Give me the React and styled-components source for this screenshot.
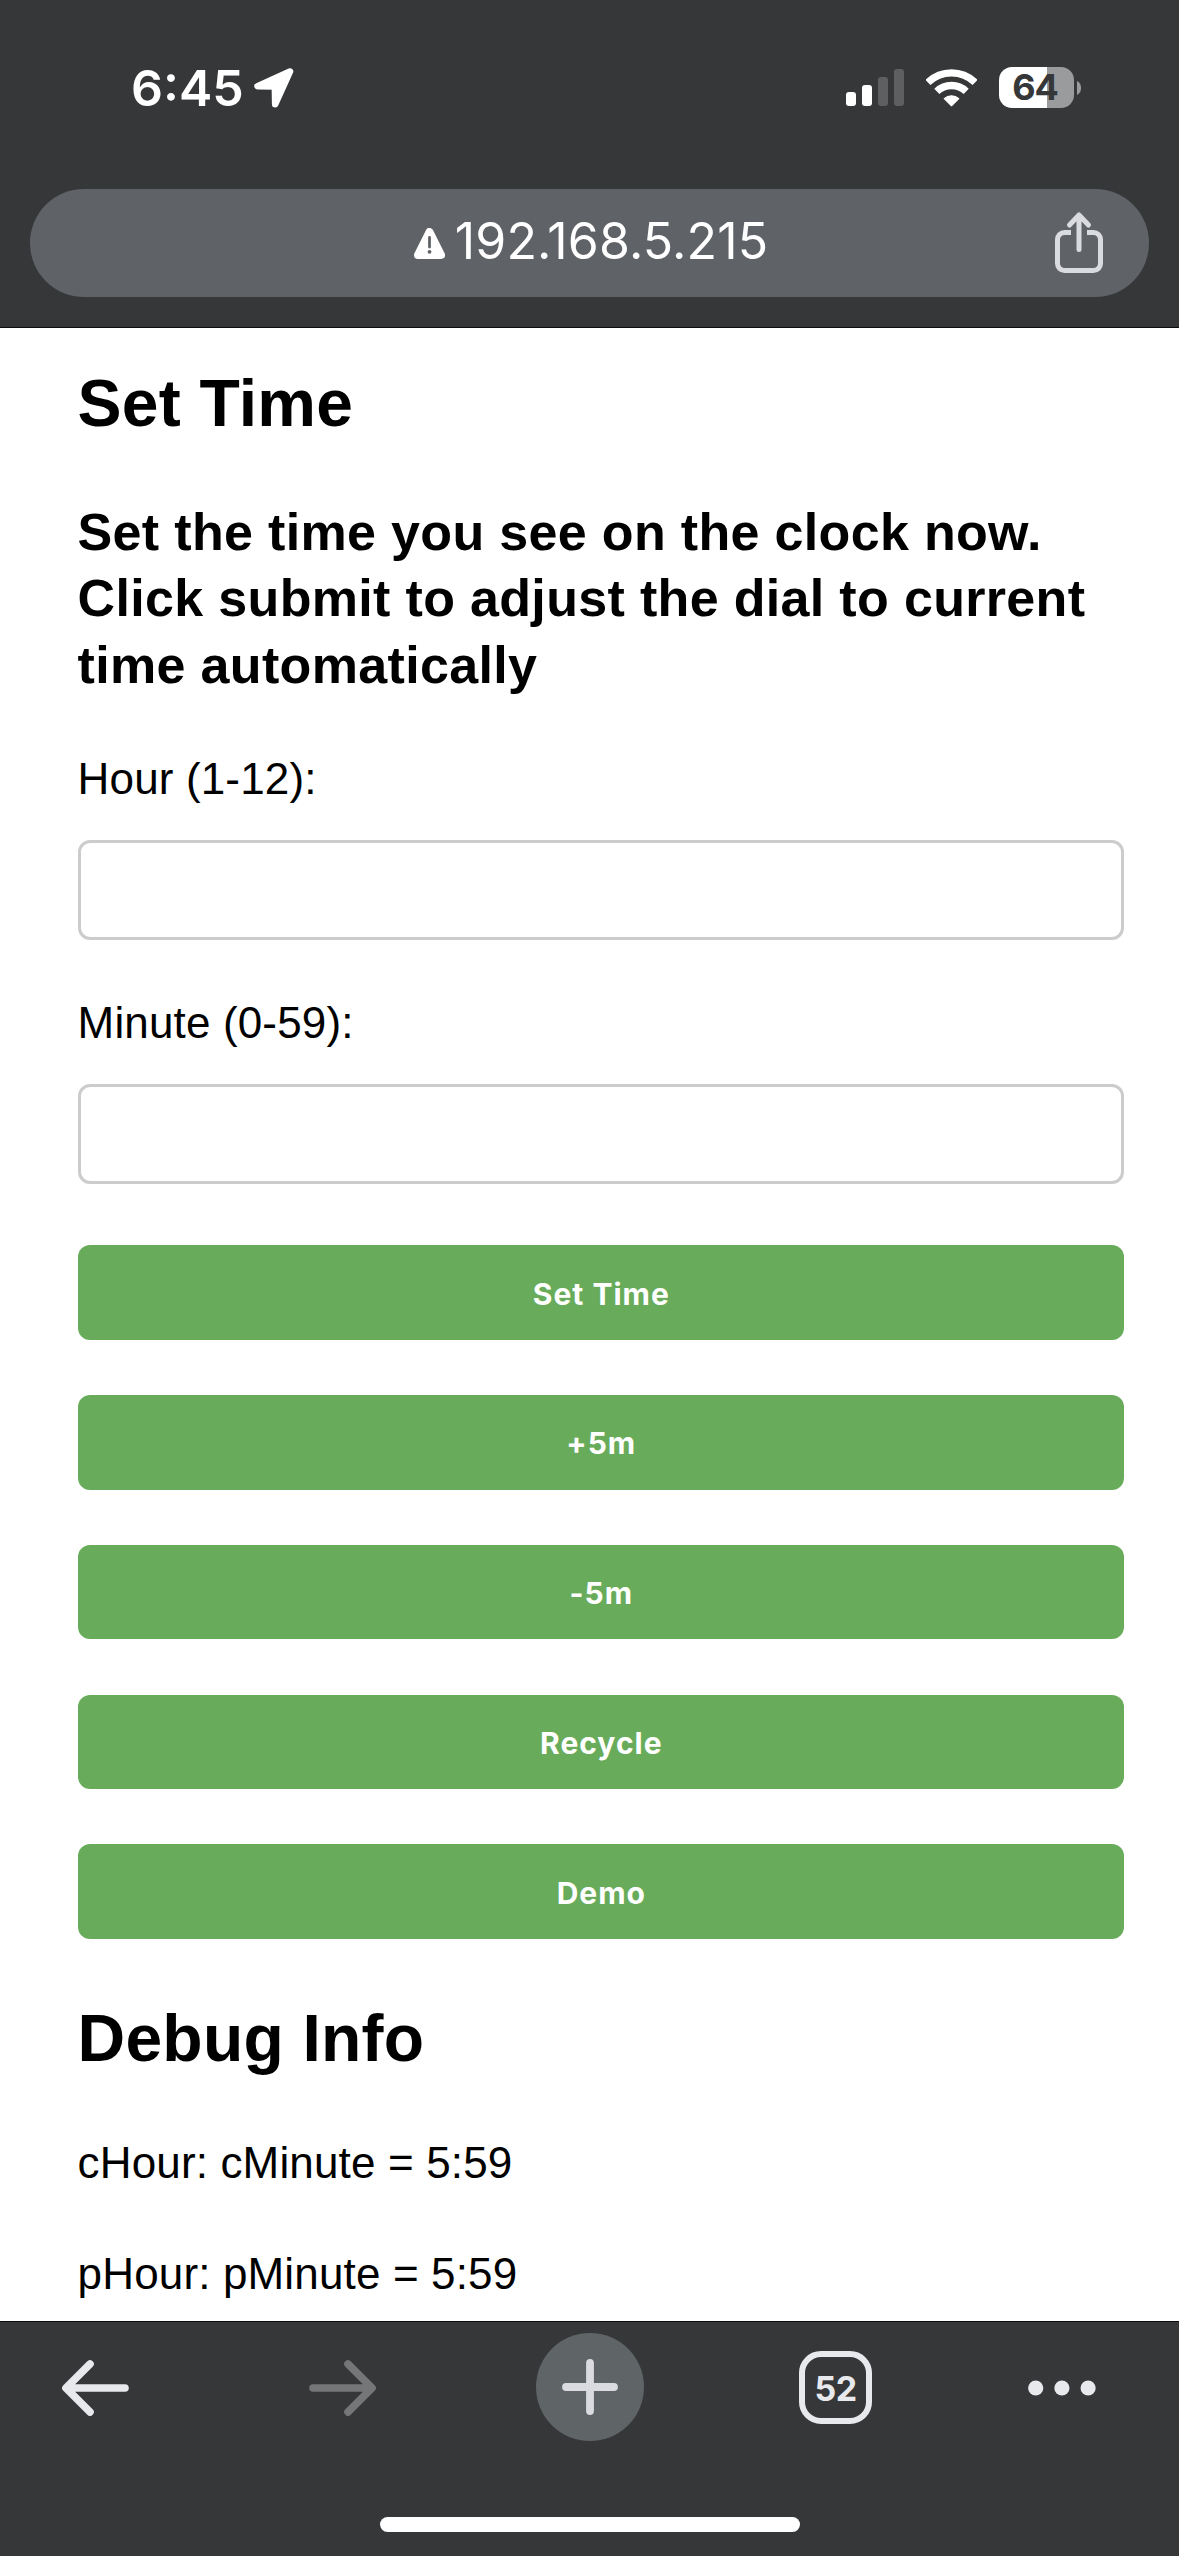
import React from "react";
import styled, { createGlobalStyle } from "styled-components";

const chrome = "#363739";
const pill = "#5f6267";
const iconLight = "#e8e9ed";
const iconSoft = "#dadbe0";
const ui = `Inter, "Liberation Sans", sans-serif`;
const web = `"Liberation Sans", Arial, sans-serif`;

const GlobalStyle = createGlobalStyle`
  *, *::before, *::after { box-sizing: border-box; }
  body { margin: 0; background: #fff; }
  h1, h3, p { margin: 0; }
  svg { display: block; flex: none; }
`;

const Screen = styled.div`
  width: 1179px;
  height: 2556px;
  display: flex;
  flex-direction: column;
  overflow: hidden;
  background: #fff;
`;

const Header = styled.header`
  flex: none;
  height: 328px;
  background: ${chrome};
  border-bottom: 1px solid #0c0c0d;
  font-family: ${ui};
  color: #fff;
`;

const StatusBar = styled.div`
  height: 175px;
  padding: 0 97px 0 131px;
  display: flex;
  align-items: center;
  justify-content: space-between;
`;

const StatusGroup = styled.div`
  display: flex;
  align-items: center;
`;

const Clock = styled.span`
  font-size: 50px;
  line-height: 60px;
  font-weight: 600;
  margin-right: 10px;
`;

const SignalBars = styled.div`
  height: 37px;
  display: flex;
  align-items: flex-end;
  gap: 6px;
  margin-right: 22px;
`;

const SignalBar = styled.span`
  width: 10px;
  height: ${(p) => p.$height}px;
  border-radius: 3px;
  background: ${(p) => (p.$active ? "#fff" : "#5e5f61")};
`;

const Battery = styled.div`
  width: 75px;
  height: 41px;
  margin-left: 22px;
  margin-right: 3px;
  border-radius: 13px;
  display: flex;
  align-items: center;
  justify-content: center;
  background: linear-gradient(to right, #fff 48px, #9a9b9d 48px);
  color: ${chrome};
  font-size: 36px;
  line-height: 41px;
  font-weight: 700;
  letter-spacing: -1px;
  padding-right: 3px;
`;

const AddressBar = styled.div`
  height: 108px;
  margin: 14px 30px 0;
  padding: 0 45px;
  border-radius: 54px;
  background: ${pill};
  display: grid;
  grid-template-columns: 1fr auto 1fr;
  align-items: center;
`;

const Host = styled.div`
  grid-column: 2;
  display: flex;
  align-items: center;
  gap: 10px;
  padding-left: 3px;
`;

const HostText = styled.span`
  font-size: 50px;
  line-height: 60px;
  letter-spacing: 0.15px;
  margin-top: -4px;
`;

const ShareSlot = styled.div`
  justify-self: end;
`;

const Page = styled.main`
  flex: 1;
  min-height: 0;
  overflow: hidden;
  padding: 37px 55px 0 77.6px;
  font-family: ${web};
  font-size: 44px;
  line-height: 50px;
  letter-spacing: 0.15px;
  color: #000;
`;

const Title = styled.h1`
  font-size: 66px;
  line-height: 76px;
  font-weight: 700;
  letter-spacing: 0.2px;
`;

const Intro = styled.h3`
  margin: 57.6px 0 56px;
  font-size: 52px;
  line-height: 66.5px;
  font-weight: 700;
  letter-spacing: 0.33px;
`;

const Form = styled.form`
  display: flex;
  flex-direction: column;
  margin-bottom: 61.4px;
`;

const Field = styled.label`
  display: flex;
  flex-direction: column;
  gap: 36px;
  margin-bottom: ${(p) => p.$gap}px;
`;

const Input = styled.input`
  width: 100%;
  height: 100px;
  margin: 0;
  padding: 0 30px;
  border: 3px solid #ccc;
  border-radius: 12px;
  background: #fff;
  font: inherit;
  outline: none;
`;

const Actions = styled.div`
  display: flex;
  flex-direction: column;
  gap: 55.3px;
`;

const Action = styled.button`
  height: 94.5px;
  padding: 2px 0 0 1px;
  border: 0;
  border-radius: 12px;
  background: #68ac5b;
  color: #fff;
  font-family: ${ui};
  font-size: 30px;
  font-weight: 680;
  letter-spacing: 1px;
`;

const DebugLine = styled.p`
  margin-top: 61.2px;
`;

const Footer = styled.footer`
  flex: none;
  height: 235px;
  background: ${chrome};
  border-top: 1px solid #0c0c0d;
  display: flex;
  flex-direction: column;
  align-items: center;
  font-family: ${ui};
`;

const Toolbar = styled.nav`
  width: 100%;
  height: 131px;
  padding-left: 62px;
  display: grid;
  grid-template-columns: 247px 227px 263px 229px 68px;
  align-items: center;
`;

const NewTab = styled.div`
  width: 108px;
  height: 108px;
  margin-bottom: 2px;
  border-radius: 50%;
  background: #5f6466;
  display: flex;
  align-items: center;
  justify-content: center;
`;

const TabCount = styled.div`
  width: 73px;
  height: 73px;
  border: 6.5px solid ${iconLight};
  border-radius: 22px;
  display: flex;
  align-items: center;
  justify-content: center;
  color: ${iconLight};
  font-size: 34px;
  line-height: 40px;
  font-weight: 660;
  letter-spacing: -0.6px;
  padding-top: 3px;
`;

const HomeIndicator = styled.div`
  width: 420px;
  height: 15px;
  margin-top: 64px;
  border-radius: 8px;
  background: #fff;
`;

const LocationArrow = () => (
  <svg width="40" height="41" viewBox="0 0 40 41">
    <path
      d="M36 4.5 L3.6 19.2 L20.9 19.4 L21.2 37.2 Z"
      fill="#fff"
      stroke="#fff"
      strokeWidth="6.6"
      strokeLinejoin="round"
    />
  </svg>
);

const Wifi = () => (
  <svg width="51" height="39" viewBox="0 0 51 39">
    <g fill="none" stroke="#fff" strokeWidth="7.3">
      <path d="M1.9 14.5 A33.8 33.8 0 0 1 49.1 14.5" />
      <path d="M10.8 23.4 A21.3 21.3 0 0 1 40.2 23.4" />
    </g>
    <path
      d="M18.2 30.6 A11 11 0 0 1 32.8 30.6 L25.5 37.7 Z"
      fill="#fff"
      stroke="#fff"
      strokeWidth="1.2"
      strokeLinejoin="round"
    />
  </svg>
);

const BatteryTip = () => (
  <svg width="5" height="14" viewBox="0 0 5 14">
    <path d="M0 0 C5.4 2.4 5.4 11.6 0 14 Z" fill="#9a9b9d" />
  </svg>
);

const NotSecure = () => (
  <svg width="31" height="31" viewBox="0 0 31 31">
    <path
      d="M15.5 4 L27 27 H4 Z"
      fill="#fff"
      stroke="#fff"
      strokeWidth="8"
      strokeLinejoin="round"
    />
    <path d="M15.5 9.5 V19" stroke={pill} strokeWidth="2.8" strokeLinecap="round" />
    <circle cx="15.5" cy="23.8" r="1.9" fill={pill} />
  </svg>
);

const Share = () => (
  <svg width="50" height="66" viewBox="0 0 50 66" fill="none" stroke={iconSoft} strokeWidth="5">
    <path d="M17 22.5 H10.5 A7 7 0 0 0 3.5 29.5 V53.5 A7 7 0 0 0 10.5 60.5 H39.5 A7 7 0 0 0 46.5 53.5 V29.5 A7 7 0 0 0 39.5 22.5 H33" />
    <path d="M25 5.5 V39.5 M15.5 15 L25 5 L34.5 15" strokeLinecap="round" strokeLinejoin="round" />
  </svg>
);

const Arrow = ({ forward }) => (
  <svg
    width="67"
    height="56"
    viewBox="0 0 67 56"
    fill="none"
    stroke={forward ? "#757678" : iconLight}
    strokeWidth="7.6"
    strokeLinecap="round"
    strokeLinejoin="round"
  >
    <path d={forward ? "M39 4 L63 28 L39 52 M4 28 H62" : "M28 4 L4 28 L28 52 M5 28 H63"} />
  </svg>
);

const Plus = () => (
  <svg width="56" height="56" viewBox="0 0 56 56" stroke={iconSoft} strokeWidth="7.8" strokeLinecap="round">
    <path d="M28 4 V52 M4 28 H52" />
  </svg>
);

const More = () => (
  <svg width="68" height="16" viewBox="0 0 68 16" fill={iconLight}>
    <circle cx="7.7" cy="8" r="7.6" />
    <circle cx="33.9" cy="8" r="7.6" />
    <circle cx="60.1" cy="8" r="7.6" />
  </svg>
);

const signal = [
  { height: 14, active: true },
  { height: 21, active: true },
  { height: 29, active: false },
  { height: 37, active: false },
];

const actions = ["Set Time", "+5m", "-5m", "Recycle", "Demo"];

export default function App() {
  return (
    <>
      <GlobalStyle />
      <Screen>
        <Header>
          <StatusBar>
            <StatusGroup>
              <Clock>6:45</Clock>
              <LocationArrow />
            </StatusGroup>
            <StatusGroup>
              <SignalBars>
                {signal.map((bar) => (
                  <SignalBar key={bar.height} $height={bar.height} $active={bar.active} />
                ))}
              </SignalBars>
              <Wifi />
              <Battery>64</Battery>
              <BatteryTip />
            </StatusGroup>
          </StatusBar>
          <AddressBar>
            <Host>
              <NotSecure />
              <HostText>192.168.5.215</HostText>
            </Host>
            <ShareSlot>
              <Share />
            </ShareSlot>
          </AddressBar>
        </Header>
        <Page>
          <Title>Set Time</Title>
          <Intro>
            Set the time you see on the clock now. Click submit to adjust the dial to current time
            automatically
          </Intro>
          <Form onSubmit={(e) => e.preventDefault()}>
            <Field $gap={58.4}>
              Hour (1-12):
              <Input />
            </Field>
            <Field $gap={60.8}>
              Minute (0-59):
              <Input />
            </Field>
            <Actions>
              {actions.map((label) => (
                <Action key={label} type="button">
                  {label}
                </Action>
              ))}
            </Actions>
          </Form>
          <Title>Debug Info</Title>
          <DebugLine>cHour: cMinute = 5:59</DebugLine>
          <DebugLine>pHour: pMinute = 5:59</DebugLine>
        </Page>
        <Footer>
          <Toolbar>
            <Arrow />
            <Arrow forward />
            <NewTab>
              <Plus />
            </NewTab>
            <TabCount>52</TabCount>
            <More />
          </Toolbar>
          <HomeIndicator />
        </Footer>
      </Screen>
    </>
  );
}
